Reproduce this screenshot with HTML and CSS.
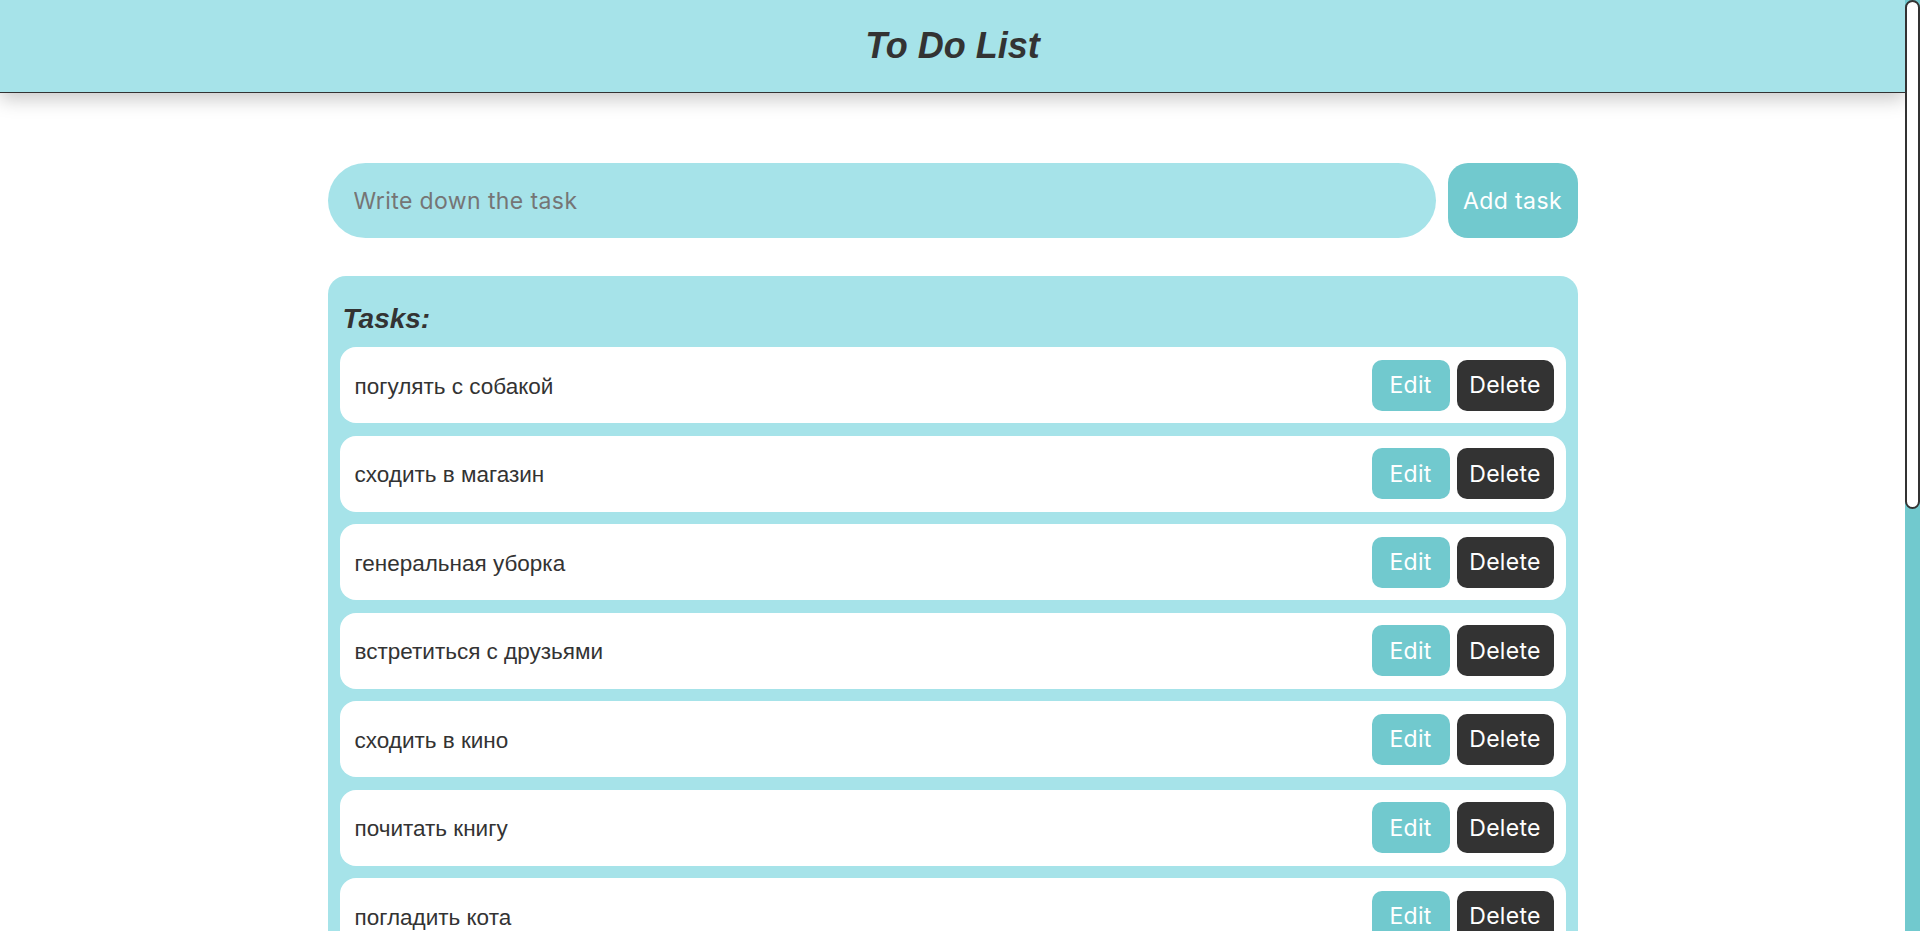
FILE: index.html
```html
<!DOCTYPE html>
<html lang="ru">
<head>
<meta charset="utf-8">
<title>To Do List</title>
<link rel="stylesheet" href="styles.css">
</head>
<body>
<header class="header">
  <h1 class="title">To Do List</h1>
</header>
<main class="app">
  <form class="add-form">
    <input class="add-input" type="text" placeholder="Write down the task">
    <button class="add-btn" type="button">Add task</button>
  </form>
  <section class="tasks">
    <h2 class="tasks-title">Tasks:</h2>
    <ul class="task-list">
      <li class="task"><span class="task-text">погулять с собакой</span><div class="task-actions"><button class="btn btn-edit" type="button">Edit</button><button class="btn btn-delete" type="button">Delete</button></div></li>
      <li class="task"><span class="task-text">сходить в магазин</span><div class="task-actions"><button class="btn btn-edit" type="button">Edit</button><button class="btn btn-delete" type="button">Delete</button></div></li>
      <li class="task"><span class="task-text">генеральная уборка</span><div class="task-actions"><button class="btn btn-edit" type="button">Edit</button><button class="btn btn-delete" type="button">Delete</button></div></li>
      <li class="task"><span class="task-text">встретиться с друзьями</span><div class="task-actions"><button class="btn btn-edit" type="button">Edit</button><button class="btn btn-delete" type="button">Delete</button></div></li>
      <li class="task"><span class="task-text">сходить в кино</span><div class="task-actions"><button class="btn btn-edit" type="button">Edit</button><button class="btn btn-delete" type="button">Delete</button></div></li>
      <li class="task"><span class="task-text">почитать книгу</span><div class="task-actions"><button class="btn btn-edit" type="button">Edit</button><button class="btn btn-delete" type="button">Delete</button></div></li>
      <li class="task"><span class="task-text">погладить кота</span><div class="task-actions"><button class="btn btn-edit" type="button">Edit</button><button class="btn btn-delete" type="button">Delete</button></div></li>
    </ul>
  </section>
</main>
<div class="scrollbar" aria-hidden="true"><div class="scrollbar-thumb"></div></div>
</body>
</html>
```
FILE: styles.css
```css
body {
  margin: 0 15px 0 0;
  background: #ffffff;
  color: #333333;
  font-family: "Liberation Sans", Arial, sans-serif;
}

.scrollbar {
  position: fixed;
  top: 0;
  right: 0;
  width: 15px;
  height: 100vh;
  background: #71c9ce;
}

.scrollbar-thumb {
  height: 509px;
  box-sizing: border-box;
  background: #ffffff;
  border: 2px solid #333333;
  border-radius: 8px;
}

.header {
  height: 92px;
  background: #a6e3e9;
  border-bottom: 1px solid #333333;
  box-shadow: 0 6px 18px rgba(0, 0, 0, 0.22);
  display: flex;
  align-items: center;
  justify-content: center;
}

.title {
  margin: 0;
  font-family: "Liberation Sans", Arial, sans-serif;
  font-style: italic;
  font-weight: 700;
  font-size: 36px;
  line-height: 1;
  color: #333333;
}

.app {
  width: 1250px;
  margin: 70px auto 0;
  padding-bottom: 40px;
}

.add-form {
  display: flex;
  gap: 12px;
  margin: 0 0 38px;
}

.add-input {
  flex: 1;
  height: 75px;
  box-sizing: border-box;
  border: none;
  outline: none;
  border-radius: 38px;
  background: #a6e3e9;
  padding: 0 26px;
  font-family: "Inter", "Liberation Sans", sans-serif;
  font-size: 23px;
  letter-spacing: 0.4px;
  color: #333333;
}

.add-input::placeholder {
  color: #757575;
}

.add-btn {
  width: 130px;
  height: 75px;
  border: none;
  border-radius: 20px;
  background: #71c9ce;
  color: #ffffff;
  font-family: "Inter", "Liberation Sans", sans-serif;
  font-size: 23px;
  letter-spacing: 0.4px;
  padding: 0;
}

.tasks {
  background: #a6e3e9;
  border-radius: 18px;
  padding: 12px;
}

.tasks-title {
  margin: 14px 3px 12px;
  font-family: "Liberation Sans", Arial, sans-serif;
  font-style: italic;
  font-weight: 700;
  font-size: 28px;
  line-height: 33px;
  color: #333333;
}

.task-list {
  list-style: none;
  margin: 0;
  padding: 0;
  display: flex;
  flex-direction: column;
  gap: 12.5px;
}

.task {
  height: 76px;
  box-sizing: border-box;
  background: #ffffff;
  border-radius: 16px;
  padding: 0 12px 0 15px;
  display: flex;
  align-items: center;
  justify-content: space-between;
}

.task-text {
  font-size: 22.5px;
  color: #333333;
  padding-top: 3px;
}

.task-actions {
  display: flex;
  gap: 7px;
}

.btn {
  height: 51px;
  border: none;
  border-radius: 10px;
  color: #ffffff;
  font-family: "Inter", "Liberation Sans", sans-serif;
  font-size: 23px;
  letter-spacing: 0.3px;
  padding: 0;
}

.btn-edit {
  width: 78px;
  background: #71c9ce;
}

.btn-delete {
  width: 97px;
  background: #333333;
}
```
